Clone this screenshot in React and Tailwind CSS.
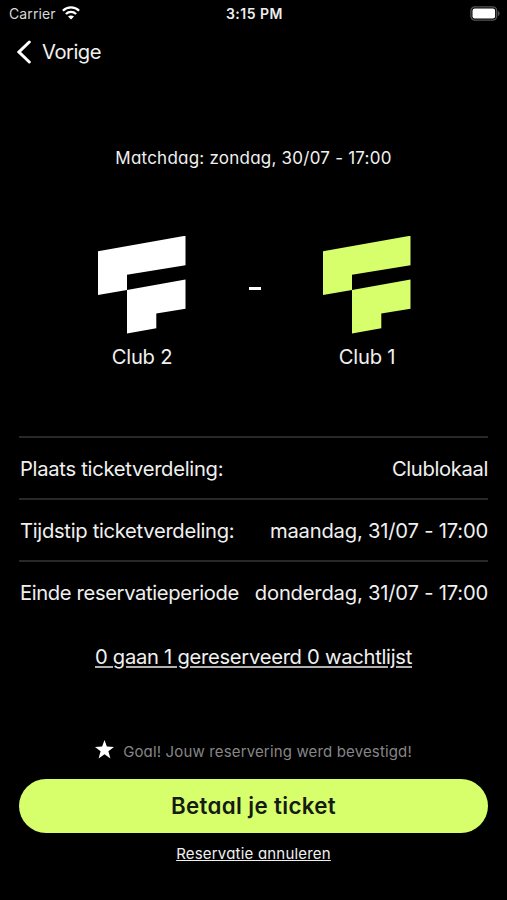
// src/App.jsx

const details = [
  { label: "Plaats ticketverdeling:", value: "Clublokaal", labelClass: "tracking-[-0.28px]", valueClass: "tracking-[-0.35px]" },
  { label: "Tijdstip ticketverdeling:", value: "maandag, 31/07 - 17:00", labelClass: "tracking-[-0.3px]", valueClass: "tracking-[-0.2px]" },
  { label: "Einde reservatieperiode", value: "donderdag, 31/07 - 17:00", labelClass: "tracking-[-0.36px]", valueClass: "tracking-[-0.2px]" },
];

function StatusBar() {
  return (
    <div className="grid h-[26px] grid-cols-3 items-center pl-[9px] pr-[7px] text-[14px]">
      <div className="flex items-center gap-[6px] text-[#d8d8d8]">
        <span className="tracking-[0.1px]">Carrier</span>
        <svg width="18" height="14" viewBox="0 0 18 14" fill="none" stroke="white" strokeWidth="2.3">
          <path d="M0.9 4.8 C5.4 0.3 12.6 0.3 17.1 4.8" />
          <path d="M3.9 8 C6.8 5.2 11.2 5.2 14.1 8" />
          <path d="M9 13.6 L6 10.6 C7.7 9 10.3 9 12 10.6 Z" fill="white" stroke="none" />
        </svg>
      </div>
      <span className="text-center font-semibold tracking-[0.5px] text-[#ededed]">3:15 PM</span>
      <svg className="justify-self-end" width="30" height="15" viewBox="0 0 30 15">
        <rect x="0.9" y="0.9" width="25.8" height="13.2" rx="4" fill="none" stroke="#555" strokeWidth="1.3" />
        <rect x="2.5" y="2.6" width="22.6" height="9.8" rx="2.2" fill="white" />
        <path d="M28 5 C30 5.8 30 9.2 28 10 Z" fill="#555" />
      </svg>
    </div>
  );
}

function Club({ name, color }) {
  return (
    <div className="flex w-[88px] flex-col items-center">
      <svg className={color} width="88" height="98" viewBox="0 0 88 98" fill="currentColor">
        <path d="M0 15.2 L87.5 -0.3 V29.2 L29 38.7 V54 L0 58.9 Z" />
        <path d="M29 54 L87.5 43.4 V72.7 L58.3 77.5 V92.2 L29 97.4 Z" />
      </svg>
      <span className="mt-[9px] text-[20.2px] leading-7 tracking-[-0.25px]">{name}</span>
    </div>
  );
}

export default function App() {
  return (
    <div className="flex h-[900px] w-[507px] flex-col bg-black font-['Inter',sans-serif] text-[#f0f0f0]">
      <StatusBar />

      {/* back button */}
      <button className="mt-3 flex h-7 items-center gap-[11px] self-start pl-[17px] text-[20.2px]">
        <svg width="14" height="24" viewBox="0 0 14 24" fill="none" stroke="white" strokeWidth="3" strokeLinecap="round">
          <path d="M12.3 2 L2 12 L12.3 22" />
        </svg>
        <span className="tracking-[-0.5px]">Vorige</span>
      </button>

      <p className="mt-20 text-center text-[17px] leading-6 tracking-[0.23px] [font-feature-settings:'cv11']">
        Matchdag: zondag, 30/07 - 17:00
      </p>

      <div className="mt-[66px] flex justify-between pl-[98px] pr-[96px]">
        <Club name="Club 2" color="text-white" />
        <span className="mt-[51px] h-[3px] w-3 bg-white" />
        <Club name="Club 1" color="text-[#d7ff6b]" />
      </div>

      <div className="mx-[19px] mt-[65px]">
        {details.map((row) => (
          <div
            key={row.label}
            className="flex h-[62px] items-center justify-between whitespace-nowrap border-t-2 border-[#282828] pl-px pt-[3px] text-[20.2px]"
          >
            <span className={row.labelClass}>{row.label}</span>
            <span className={row.valueClass}>{row.value}</span>
          </div>
        ))}
      </div>

      <a className="mt-[21px] self-center text-[20.2px] leading-7 tracking-[-0.28px] underline decoration-[#b0b0b0] decoration-2 underline-offset-2">
        0 gaan 1 gereserveerd 0 wachtlijst
      </a>

      <div className="mt-[71px] flex h-5 items-center justify-center gap-[9px]">
        <svg className="mb-[6px]" width="19" height="19" viewBox="0 0 19 19" fill="white">
          <path d="M9.5 0 L11.9 6.6 L19 6.9 L13.4 11.2 L15.4 18.4 L9.5 14.3 L3.6 18.4 L5.6 11.2 L0 6.9 L7.1 6.6 Z" />
        </svg>
        <span className="text-[15px] tracking-[0.15px] text-[#868686] [font-feature-settings:'cv11']">
          Goal! Jouw reservering werd bevestigd!
        </span>
      </div>

      <button className="mx-[19px] mt-[17px] h-[54px] rounded-full bg-[#d7ff6b] text-[22.3px] font-semibold tracking-[0.36px] text-[#141c14] [font-feature-settings:'cv11']">
        Betaal je ticket
      </button>
      <a className="mt-[11px] self-center text-[15px] leading-5 tracking-[0.2px] underline underline-offset-1 [font-feature-settings:'cv11']">
        Reservatie annuleren
      </a>
    </div>
  );
}
